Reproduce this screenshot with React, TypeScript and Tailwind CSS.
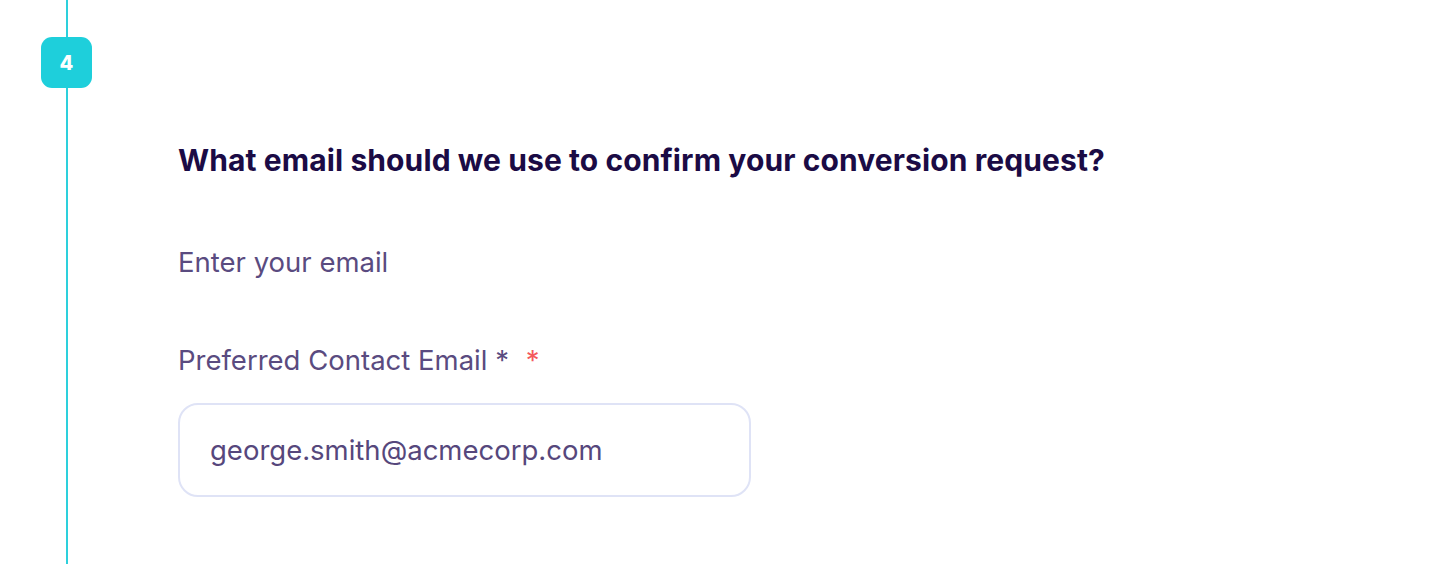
export default function App() {
  return (
    <div className="w-[1450px] h-[564px] bg-white flex overflow-hidden" style={{ fontFamily: 'Inter, "Noto Sans", sans-serif' }}>
      {/* step rail */}
      <div className="w-[134px] shrink-0 relative flex flex-col items-center">
        <div className="w-[2px] h-full bg-[#2dd0dc]" />
        <div className="absolute top-[37px] left-[41px] w-[51px] h-[51px] rounded-[11px] bg-[#1ecfdb] flex items-center justify-center text-white font-extrabold text-[20px]">
          4
        </div>
      </div>
      <div className="pl-[44px] pt-[140px] flex flex-col">
        <h2 className="text-[30px] font-bold text-[#1b0b45] leading-[40px] tracking-[0.1px]">
          What email should we use to confirm your conversion request?
        </h2>
        <p className="mt-[66px] text-[27.5px] text-[#5a4b80] leading-[32px]">Enter your email</p>
        <label className="mt-[66px] text-[27.5px] text-[#5a4b80] leading-[32px]">
          Preferred Contact Email * <span className="text-[#f4595c] ml-[9px]">*</span>
        </label>
        <div className="mt-[27px] w-[573px] h-[94px] rounded-[20px] border-2 border-[#dfe3f6] flex items-center pl-[30px]">
          <span className="text-[27.5px] text-[#56477c] pt-[2px]">george.smith@acmecorp.com</span>
        </div>
      </div>
    </div>
  );
}
